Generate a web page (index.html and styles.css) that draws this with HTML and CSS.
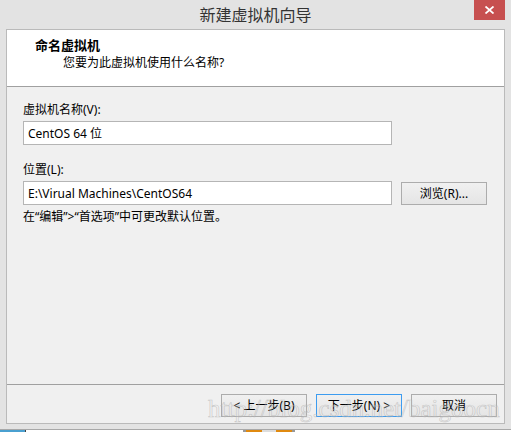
FILE: index.html
```html
<!DOCTYPE html>
<html lang="zh-CN">
<head>
<meta charset="utf-8">
<title>新建虚拟机向导</title>
<link rel="stylesheet" href="styles.css">
</head>
<body>
<div class="window">
  <div class="titlebar">
    <span class="title-spacer"></span>
    <span class="title">新建虚拟机向导</span>
    <div class="title-right">
      <button class="close" aria-label="关闭">
        <svg width="9" height="8" viewBox="0 0 9 8"><path d="M0.5 0.5 L8.5 7.5 M8.5 0.5 L0.5 7.5" stroke="#fff" stroke-width="1.8" fill="none"/></svg>
      </button>
    </div>
  </div>
  <div class="client">
    <div class="header">
      <div class="header-title">命名虚拟机</div>
      <div class="header-sub">您要为此虚拟机使用什么名称?</div>
    </div>
    <div class="body">
      <div class="label">虚拟机名称(V):</div>
      <div class="row">
        <input class="field" type="text" value="CentOS 64 位">
      </div>
      <div class="label">位置(L):</div>
      <div class="row">
        <input class="field" type="text" value="E:\Virual Machines\CentOS64">
        <button class="btn browse">浏览(R)...</button>
      </div>
      <div class="hint">在“编辑”&gt;“首选项”中可更改默认位置。</div>
    </div>
    <div class="footer">
      <button class="btn">&lt; 上一步(B)</button>
      <button class="btn default">下一步(N) &gt;</button>
      <button class="btn">取消</button>
    </div>
  </div>
  <div class="frame-bottom"></div>
  <div class="taskbar">
    <span class="tb-blue"></span>
    <span class="tb-dark"></span>
    <span class="tb-fill"></span>
    <span class="tb-gray"></span>
    <span class="tb-orange"></span>
    <span class="tb-mid"></span>
    <span class="tb-orange"></span>
    <span class="tb-gray"></span>
    <span class="tb-fill"></span>
  </div>
  <div class="watermark">http://blog.csdn.net/baigoocn</div>
</div>
</body>
</html>
```

FILE: styles.css
```css
* { box-sizing: border-box; }

html, body {
  margin: 0;
  padding: 0;
}

body {
  width: 511px;
  height: 432px;
  overflow: hidden;
  font-family: "Noto Sans", "Noto Sans CJK SC", sans-serif;
  font-size: 12px;
  line-height: 16px;
  color: #000;
}

.window {
  position: relative;
  width: 511px;
  height: 432px;
  background: #e3e3e3;
  display: flex;
  flex-direction: column;
}

.titlebar {
  height: 29px;
  display: grid;
  grid-template-columns: 1fr auto 1fr;
  align-items: start;
}

.title {
  font-family: "Noto Sans CJK SC", sans-serif;
  font-size: 16px;
  line-height: 29px;
  color: #333;
}

.title-right {
  display: flex;
  justify-content: flex-end;
  padding-right: 6px;
}

.close {
  width: 31px;
  height: 20px;
  border: none;
  padding: 0;
  margin: 0;
  background: #c75050;
  display: flex;
  align-items: center;
  justify-content: center;
}

.client {
  margin: 0 6px;
  height: 395px;
  border: 1px solid #bababa;
  display: flex;
  flex-direction: column;
  background: #f0f0f0;
}

.header {
  height: 57px;
  background: #fff;
  border-bottom: 1px solid #a0a0a0;
  padding: 7px 0 0 28px;
}

.header-title {
  font-family: "Noto Sans CJK SC", sans-serif;
  font-weight: bold;
  font-size: 13px;
  line-height: 16px;
}

.header-sub {
  margin-top: 2px;
  padding-left: 28px;
}

.body {
  flex: 1;
  padding: 15px 0 0 16px;
  border-bottom: 1px solid #a0a0a0;
}

.label {
  line-height: 16px;
}

.row {
  display: flex;
  align-items: center;
  gap: 9px;
  margin-top: 3px;
}

.row + .label { margin-top: 17px; }

.field {
  width: 369px;
  height: 24px;
  border: 1px solid #b5b5b5;
  background: #fff;
  padding: 0 4px;
  margin: 0;
  font-family: "Noto Sans", "Noto Sans CJK SC", sans-serif;
  font-size: 12px;
  color: #000;
  outline: none;
}

.btn {
  width: 86px;
  height: 23px;
  margin: 0;
  padding: 0;
  border: 1px solid #acacac;
  background: linear-gradient(#f0f0f0, #e5e5e5);
  font-family: "Noto Sans", "Noto Sans CJK SC", sans-serif;
  font-size: 12px;
  line-height: 21px;
  color: #000;
  text-align: center;
}

.hint {
  margin-top: 4px;
}

.footer {
  height: 38px;
  display: flex;
  justify-content: flex-end;
  align-items: flex-start;
  gap: 9px;
  padding: 9px 7px 0 0;
}

.btn.default {
  border-color: #3c9cf0;
}

.frame-bottom {
  height: 6px;
  border-bottom: 1px solid #a8a8a8;
}

.taskbar {
  height: 2px;
  display: flex;
  background: #fff;
}

.taskbar span { display: block; height: 2px; }
.tb-blue { width: 25px; background: #4aa0d0; }
.tb-dark { width: 1px; background: #444; }
.tb-fill { flex: 1; background: #fff; }
.tb-gray { width: 3px; background: #999; }
.tb-orange { width: 16px; background: #e08a10; }
.tb-mid { width: 14px; background: #ddd; }

.watermark {
  position: absolute;
  left: 208px;
  top: 396px;
  font-family: "Liberation Serif", serif;
  font-size: 25px;
  line-height: 25px;
  color: rgba(255, 255, 255, 0.15);
  -webkit-text-stroke: 0.6px rgba(170, 170, 170, 0.6);
  pointer-events: none;
  white-space: nowrap;
}
```
